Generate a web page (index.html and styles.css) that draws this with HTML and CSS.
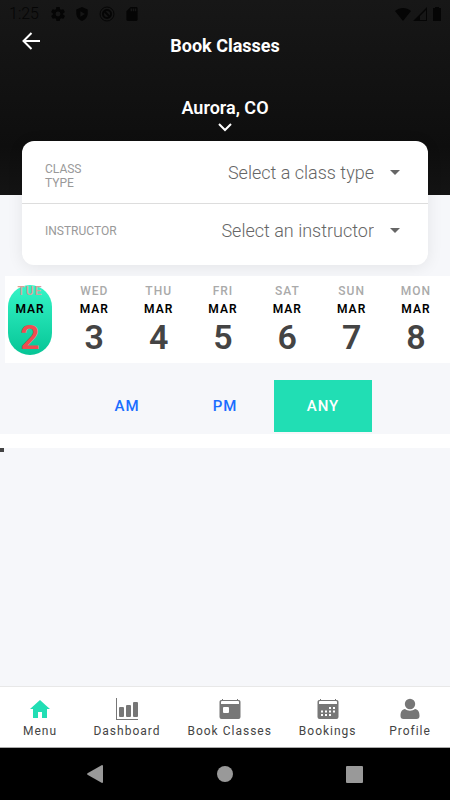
FILE: index.html
```html
<!DOCTYPE html>
<html lang="en">
<head>
    <meta charset="UTF-8">
    <meta name="viewport" content="width=device-width, initial-scale=1.0">
    <title>Book Classes</title>
    <link rel="stylesheet" href="styles.css">
</head>
<body>
    <header class="header">
        <div class="status-bar">
            <div class="status-group">
                <span class="clock">1:25</span>
                <svg width="14" height="14" viewBox="2 2 20 20" fill="currentColor"><path d="M19.4 13a7.500 7.500 0 0 0 0-2l2.100-1.600a.5.5 0 0 0 .1-.7l-2-3.400a.5.5 0 0 0-.6-.2l-2.500 1a7.300 7.300 0 0 0-1.700-1L14.500 2.400A.5.5 0 0 0 14 2h-4a.5.5 0 0 0-.5.400l-.4 2.700a7.700 7.700 0 0 0-1.700 1l-2.500-1a.5.5 0 0 0-.6.2l-2 3.400a.5.5 0 0 0 .1.700L4.600 11a7.900 7.900 0 0 0 0 2l-2.100 1.600a.5.5 0 0 0-.1.700l2 3.400c.1.200.4.300.6.200l2.500-1c.5.400 1.100.7 1.700 1l.4 2.700c0 .2.200.4.500.4h4c.2 0 .5-.2.500-.4l.4-2.700a7.300 7.300 0 0 0 1.700-1l2.500 1c.2.100.5 0 .6-.2l2-3.400a.5.5 0 0 0-.1-.7zM12 15.500a3.500 3.500 0 1 1 0-7 3.500 3.500 0 0 1 0 7z"/></svg>
                <svg width="14" height="14" viewBox="2 1 20 22" fill="currentColor"><path fill-rule="evenodd" d="M12 1 3 5v6c0 5.500 3.800 10.700 9 12 5.200-1.300 9-6.500 9-12V5zM9.500 7.500 16.500 12l-7 4.500z"/></svg>
                <svg width="16" height="16" viewBox="0 0 16 16" fill="none" stroke="currentColor"><circle cx="8" cy="8" r="7" stroke-width="1"/><circle cx="8" cy="8" r="4" stroke-width="2"/><path d="m5 5 6 6" stroke-width="2"/></svg>
                <svg width="14" height="14" viewBox="2 2 20 20" fill="currentColor"><path fill-rule="evenodd" d="M18 2h-8L4 8v12a2 2 0 0 0 2 2h12a2 2 0 0 0 2-2V4a2 2 0 0 0-2-2zm-6 6h-2V4h2zm3 0h-2V4h2zm3 0h-2V4h2z"/></svg>
            </div>
            <div class="status-group signals">
                <svg width="16" height="14" viewBox="0 0 16 14" fill="currentColor"><path d="M8 14 0 4c4.500-4 11.500-4 16 0z"/></svg>
                <svg width="14" height="14" viewBox="0 0 14 14" fill="currentColor"><path fill-rule="evenodd" d="M14 0v14H0zM13 3 7 9v4h6z"/></svg>
                <svg width="16" height="14" viewBox="0 0 16 14" fill="currentColor"><path d="M6 0h4v1h2v13H4V1h2z"/></svg>
            </div>
        </div>

        <div class="title-bar">
            <button class="back" aria-label="Back">
                <svg width="18" height="18" viewBox="0 0 18 18" fill="none" stroke="currentColor" stroke-width="2"><path d="M18 9H2M9.500 1 1.500 9l8 8"/></svg>
            </button>
            <h1>Book Classes</h1>
        </div>

        <button class="location">
            Aurora, CO
            <svg width="14" height="9" viewBox="0 0 14 9" fill="none" stroke="currentColor" stroke-width="2"><path d="m1 1 6 6 6-6"/></svg>
        </button>
    </header>

    <main>
        <form class="card">
            <div class="field">
                <label for="classType">CLASS TYPE</label>
                <select id="classType">
                    <option>Select a class type</option>
                </select>
                <svg width="10" height="5" viewBox="0 0 10 5" fill="currentColor"><path d="M0 0h10L5 5z"/></svg>
            </div>
            <div class="field">
                <label for="instructor">INSTRUCTOR</label>
                <select id="instructor">
                    <option>Select an instructor</option>
                </select>
                <svg width="10" height="5" viewBox="0 0 10 5" fill="currentColor"><path d="M0 0h10L5 5z"/></svg>
            </div>
        </form>

        <div class="days">
            <button class="day selected"><span class="weekday">TUE</span><span class="month">MAR</span><span class="date">2</span></button>
            <button class="day"><span class="weekday">WED</span><span class="month">MAR</span><span class="date">3</span></button>
            <button class="day"><span class="weekday">THU</span><span class="month">MAR</span><span class="date">4</span></button>
            <button class="day"><span class="weekday">FRI</span><span class="month">MAR</span><span class="date">5</span></button>
            <button class="day"><span class="weekday">SAT</span><span class="month">MAR</span><span class="date">6</span></button>
            <button class="day"><span class="weekday">SUN</span><span class="month">MAR</span><span class="date">7</span></button>
            <button class="day"><span class="weekday">MON</span><span class="month">MAR</span><span class="date">8</span></button>
        </div>

        <div class="times">
            <button class="time">AM</button>
            <button class="time">PM</button>
            <button class="time active">ANY</button>
        </div>

        <div class="divider"></div>
        <div class="marker"></div>
    </main>

    <nav class="tabs">
        <a href="#" class="tab active">
            <svg width="22" height="22" viewBox="0 0 22 22" fill="currentColor"><path d="M11 2 1 11h3v9h5v-6h4v6h5v-9h3l-4-3.600z"/></svg>
            Menu
        </a>
        <a href="#" class="tab">
            <svg width="22" height="22" viewBox="0 0 22 22" fill="currentColor"><path d="M0 0h1v21h21v1H0z"/><rect x="3" y="9" width="5" height="10" rx="1"/><rect x="10" y="7" width="5" height="12" rx="1"/><rect x="17" y="4" width="5" height="15" rx="1"/></svg>
            Dashboard
        </a>
        <a href="#" class="tab">
            <svg width="22" height="22" viewBox="0 0 22 22" fill="currentColor"><path fill-rule="evenodd" d="M3 1h1v1h14V1h1v1a2 2 0 0 1 2.500 2v15a2 2 0 0 1-2 2h-17a2 2 0 0 1-2-2V4A2 2 0 0 1 3 2zM2 4V6h18V4a1 1 0 0 0-1-1H3a1 1 0 0 0-1 1zM5 9a1 1 0 0 0-1 1v4a1 1 0 0 0 1 1h4a1 1 0 0 0 1-1v-4a1 1 0 0 0-1-1z"/></svg>
            Book Classes
        </a>
        <a href="#" class="tab">
            <svg width="22" height="22" viewBox="0 0 22 22" fill="currentColor"><path fill-rule="evenodd" d="M3 1h1v1h14V1h1v1a2 2 0 0 1 2.500 2v15a2 2 0 0 1-2 2h-17a2 2 0 0 1-2-2V4A2 2 0 0 1 3 2zM2 4V6h18V4a1 1 0 0 0-1-1H3a1 1 0 0 0-1 1z"/><g stroke="#fff" stroke-width="2" stroke-dasharray="2 2"><path d="M12 10h6M4 13.500h14M4 17h10"/></g></svg>
            Bookings
        </a>
        <a href="#" class="tab">
            <svg width="22" height="22" viewBox="0 0 22 22" fill="currentColor"><circle cx="11" cy="6" r="5.200"/><path d="M6 11C3 11.500 1.500 13.500 1.500 18c0 2 1 3 3 3h13c2 0 3-1 3-3 0-4.500-1.500-6.500-4.500-7-2.700 2.300-7.300 2.300-10 0z"/></svg>
            Profile
        </a>
    </nav>

    <div class="system-nav">
        <button aria-label="System back"><svg width="18" height="18" viewBox="0 0 18 18" fill="currentColor"><path d="M16 0q1 0 1 1v16q0 1-1 1L1.500 9.700q-1-.7 0-1.400z"/></svg></button>
        <button aria-label="Home"><svg width="18" height="18" viewBox="0 0 18 18" fill="currentColor"><circle cx="9" cy="9" r="8"/></svg></button>
        <button aria-label="Recent apps"><svg width="18" height="18" viewBox="0 0 18 18" fill="currentColor"><rect x="0" y="1" width="17" height="17" rx="1"/></svg></button>
    </div>
</body>
</html>
```
FILE: styles.css
```css
* {
    margin: 0;
    padding: 0;
    box-sizing: border-box;
    font-family: Roboto, sans-serif;
}

body {
    background: #f6f7fa;
    min-height: 100vh;
    display: flex;
    flex-direction: column;
}

button {
    background: none;
    border: none;
    color: inherit;
    cursor: pointer;
}

svg {
    display: block;
    flex-shrink: 0;
}

/* Header */
.header {
    background: linear-gradient(#171717, #0e0e0e 75%, #141414);
    color: #fff;
    padding-bottom: 63px;
}

.status-bar {
    display: flex;
    justify-content: space-between;
    height: 27px;
    padding: 0 5px 0 9px;
    color: #050505;
}

.status-group {
    display: flex;
    align-items: center;
    gap: 10px;
}

.signals {
    gap: 2px;
}

.clock {
    font-size: 16px;
    font-weight: 300;
    margin-right: 2px;
}

.title-bar {
    display: grid;
    grid-template-columns: 1fr auto 1fr;
    align-items: start;
    padding: 5px 22px 0;
}

.back {
    justify-self: start;
}

h1 {
    font-size: 18px;
    line-height: 28px;
    font-weight: 700;
}

.location {
    display: flex;
    flex-direction: column;
    align-items: center;
    gap: 4px;
    margin: 37px auto 0;
    font-size: 18px;
    line-height: 22px;
    font-weight: 600;
}

/* Filters card */
main {
    flex: 1;
}

.card {
    background: #fff;
    margin: -54px 22px 11px;
    padding-bottom: 8px;
    border-radius: 12px;
    box-shadow: 0 2px 16px rgba(0, 0, 0, 0.08);
}

.field {
    display: flex;
    align-items: center;
    height: 62px;
    padding: 0 28px 0 23px;
    color: #666;
}

.field + .field {
    height: 54px;
    border-top: 1px solid #ddd;
}

.field label {
    width: 80px;
    padding-right: 32px;
    margin-top: 8px;
    font-size: 12px;
    line-height: 14px;
    color: #999;
}

.field + .field label {
    margin-top: 0;
    padding-right: 0;
}

.field select {
    flex: 1;
    min-width: 0;
    height: 30px;
    padding-right: 16px;
    appearance: none;
    background: none;
    border: none;
    color: #666;
    font-size: 18px;
    font-weight: 300;
    text-align-last: right;
}

/* Calendar strip */
.days {
    display: flex;
    justify-content: space-between;
    background: #fff;
    margin-left: 5px;
    padding: 9px 12px 8px 3px;
}

.day {
    display: flex;
    flex-direction: column;
    align-items: center;
    width: 44px;
    height: 70px;
    border-radius: 22px;
    letter-spacing: 1px;
    color: #444;
}

.weekday {
    font-size: 12px;
    line-height: 12px;
    font-weight: 500;
    color: #aaa;
}

.month {
    font-size: 12px;
    line-height: 24px;
    font-weight: 600;
    color: #000;
}

.date {
    font-size: 34px;
    line-height: 32px;
    font-weight: 600;
    letter-spacing: 0;
}

.day.selected {
    background: linear-gradient(#35f5c8, #06c596);
    color: #f04c50;
}

.day.selected .weekday {
    color: #d8a09a;
}

/* Time of day */
.times {
    display: flex;
    justify-content: center;
    padding: 17px 0 2px;
}

.time {
    width: 98px;
    height: 52px;
    color: #1a6dff;
    font-size: 15px;
    font-weight: 500;
    letter-spacing: 1px;
}

.time.active {
    background: #21deb4;
    color: #fff;
}

.divider {
    height: 14px;
    background: #fff;
}

.marker {
    width: 4px;
    height: 4px;
    background: #444;
}

/* Bottom tabs */
.tabs {
    display: flex;
    background: #fff;
    border-top: 1px solid #e8e8e8;
    border-bottom: 1px solid #aaa;
}

.tab {
    flex: 1 1 auto;
    min-width: 80px;
    display: flex;
    flex-direction: column;
    align-items: center;
    gap: 2px;
    padding: 11px 12px 7px;
    color: #444;
    font-size: 12px;
    line-height: 18px;
    letter-spacing: 1px;
    text-decoration: none;
    white-space: nowrap;
}

.tab svg {
    color: #777;
}

.tab.active svg {
    color: #21deb4;
}

.system-nav {
    display: flex;
    justify-content: center;
    background: #000;
    color: #999;
}

.system-nav button {
    display: flex;
    justify-content: center;
    align-items: center;
    width: 130px;
    height: 52px;
}
```
